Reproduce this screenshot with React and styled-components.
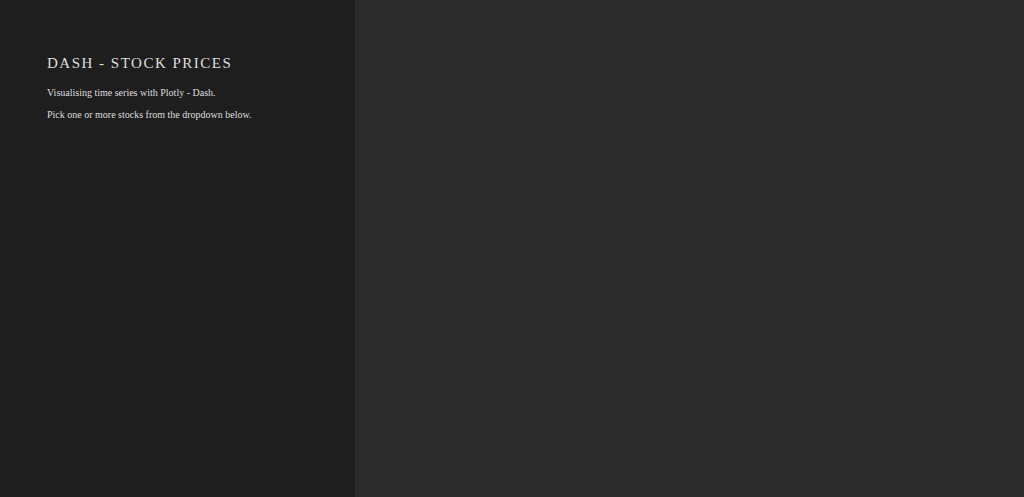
import React from 'react'
import styled, { createGlobalStyle } from 'styled-components'

const Global = createGlobalStyle`
  html, body, #root {
    margin: 0;
    height: 100%;
  }
  body {
    background: #2b2b2b;
    font-family: "Liberation Serif", "Times New Roman", serif;
  }
`

const Page = styled.div`
  display: flex;
  height: 100vh;
`

const Sidebar = styled.aside`
  width: 355px;
  flex-shrink: 0;
  background: #1e1e1e;
  padding: 54px 0 0 47px;
  box-sizing: border-box;
  color: #dedede;
`

const Title = styled.h1`
  margin: 0 0 14px;
  font-size: 15px;
  font-weight: normal;
  letter-spacing: 1.5px;
  line-height: 18px;
  text-transform: uppercase;
`

const Text = styled.p`
  margin: 0 0 8px;
  font-size: 10px;
  line-height: 14px;
`

const Main = styled.main`
  flex: 1;
  background: #2b2b2b;
`

export default function App() {
  return (
    <>
      <Global />
      <Page>
        <Sidebar>
          <Title>Dash - Stock Prices</Title>
          <Text>Visualising time series with Plotly - Dash.</Text>
          <Text>Pick one or more stocks from the dropdown below.</Text>
        </Sidebar>
        <Main />
      </Page>
    </>
  )
}
